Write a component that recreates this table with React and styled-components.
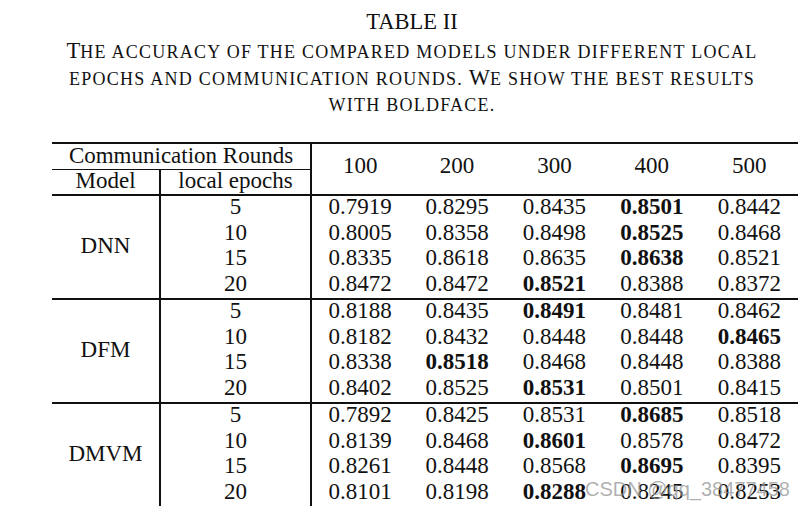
import styled, { createGlobalStyle } from "styled-components";

const GlobalStyle = createGlobalStyle`
  html, body {
    margin: 0;
    padding: 0;
    background: #ffffff;
  }
  body {
    font-family: "Liberation Serif", "Times New Roman", serif;
    color: #111111;
  }
`;

const DATA = [
  {
    model: "DNN",
    rows: [
      ["5", ["0.7919", "0.8295", "0.8435", "*0.8501", "0.8442"]],
      ["10", ["0.8005", "0.8358", "0.8498", "*0.8525", "0.8468"]],
      ["15", ["0.8335", "0.8618", "0.8635", "*0.8638", "0.8521"]],
      ["20", ["0.8472", "0.8472", "*0.8521", "0.8388", "0.8372"]],
    ],
  },
  {
    model: "DFM",
    rows: [
      ["5", ["0.8188", "0.8435", "*0.8491", "0.8481", "0.8462"]],
      ["10", ["0.8182", "0.8432", "0.8448", "0.8448", "*0.8465"]],
      ["15", ["0.8338", "*0.8518", "0.8468", "0.8448", "0.8388"]],
      ["20", ["0.8402", "0.8525", "*0.8531", "0.8501", "0.8415"]],
    ],
  },
  {
    model: "DMVM",
    rows: [
      ["5", ["0.7892", "0.8425", "0.8531", "*0.8685", "0.8518"]],
      ["10", ["0.8139", "0.8468", "*0.8601", "0.8578", "0.8472"]],
      ["15", ["0.8261", "0.8448", "0.8568", "*0.8695", "0.8395"]],
      ["20", ["0.8101", "0.8198", "*0.8288", "0.8245", "0.8253"]],
    ],
  },
];

const ROUNDS = ["100", "200", "300", "400", "500"];

const Page = styled.div`
  position: relative;
  width: 800px;
  height: 506px;
  overflow: hidden;
  padding-top: 9px;
  box-sizing: border-box;
`;

const Caption = styled.div`
  padding-left: 24px;
  text-align: center;
  font-size: 22.5px;
  line-height: 26px;
`;

const TableLabel = styled.div`
  margin-bottom: 3px;
`;

const CaptionText = styled.div`
  text-transform: uppercase;
  font-size: 18px;
  letter-spacing: 1.25px;
`;

const Initial = styled.span`
  font-size: 22.5px;
  letter-spacing: 0;
`;

const Table = styled.table`
  margin: 24px 0 0 52px;
  width: 746px;
  border-collapse: collapse;
  border-top: 2px solid #111;
  border-bottom: 3px solid #111;
  font-size: 23px;
  table-layout: fixed;
`;

const Head = styled.th`
  font-weight: normal;
  text-align: center;
  vertical-align: middle;
  padding: 0 0 ${(p) => (p.$raise ? 6 : 2)}px;
  height: ${(p) => p.$h}px;
  line-height: 18px;
  border-bottom: ${(p) => (p.$thin ? "1px" : "2px")} solid #111;
  border-right: ${(p) => (p.$divide ? "2px solid #111" : "none")};
`;

const Cell = styled.td`
  text-align: center;
  vertical-align: middle;
  padding: 0 0 3px;
  height: ${(p) => (p.$tall ? 23 : 22)}px;
  line-height: 18px;
  font-weight: ${(p) => (p.$bold ? "bold" : "normal")};
  border-right: ${(p) => (p.$divide ? "2px solid #111" : "none")};
`;

const Row = styled.tr`
  border-bottom: ${(p) => (p.$last ? "2px solid #111" : "none")};
`;

const Watermark = styled.div`
  position: absolute;
  left: 585px;
  top: 478px;
  font-family: "Liberation Sans", Arial, sans-serif;
  font-size: 20px;
  color: rgba(150, 150, 150, 0.75);
  white-space: nowrap;
  pointer-events: none;
`;

export default function App() {
  return (
    <Page>
      <GlobalStyle />
      <Caption>
        <TableLabel>TABLE II</TableLabel>
        <CaptionText>
          <Initial>T</Initial>he accuracy of the compared models under different local
          <br />
          epochs and communication rounds. <Initial>W</Initial>e show the best results
          <br />
          with boldface.
        </CaptionText>
      </Caption>
      <Table>
        <colgroup>
          <col style={{ width: "108px" }} />
          <col style={{ width: "151px" }} />
          {ROUNDS.map((r) => (
            <col key={r} />
          ))}
        </colgroup>
        <thead>
          <tr>
            <Head colSpan={2} $divide $thin $h={23}>
              Communication Rounds
            </Head>
            {ROUNDS.map((r) => (
              <Head key={r} rowSpan={2} $h={23} $raise>
                {r}
              </Head>
            ))}
          </tr>
          <tr>
            <Head $divide $h={22}>
              Model
            </Head>
            <Head $divide $h={22}>
              local epochs
            </Head>
          </tr>
        </thead>
        <tbody>
          {DATA.map((group, gi) =>
            group.rows.map(([ep, vals], ri) => (
              <Row key={group.model + ep} $last={ri === 3 && gi < DATA.length - 1}>
                {ri === 0 && (
                  <Cell rowSpan={4} $divide>
                    {group.model}
                  </Cell>
                )}
                <Cell $divide $tall={ri % 2 === 1}>
                  {ep}
                </Cell>
                {vals.map((v, vi) => {
                  const bold = v.startsWith("*");
                  return (
                    <Cell key={vi} $bold={bold} $tall={ri % 2 === 1}>
                      {bold ? v.slice(1) : v}
                    </Cell>
                  );
                })}
              </Row>
            ))
          )}
        </tbody>
      </Table>
      <Watermark>CSDN @qq_38477458</Watermark>
    </Page>
  );
}
